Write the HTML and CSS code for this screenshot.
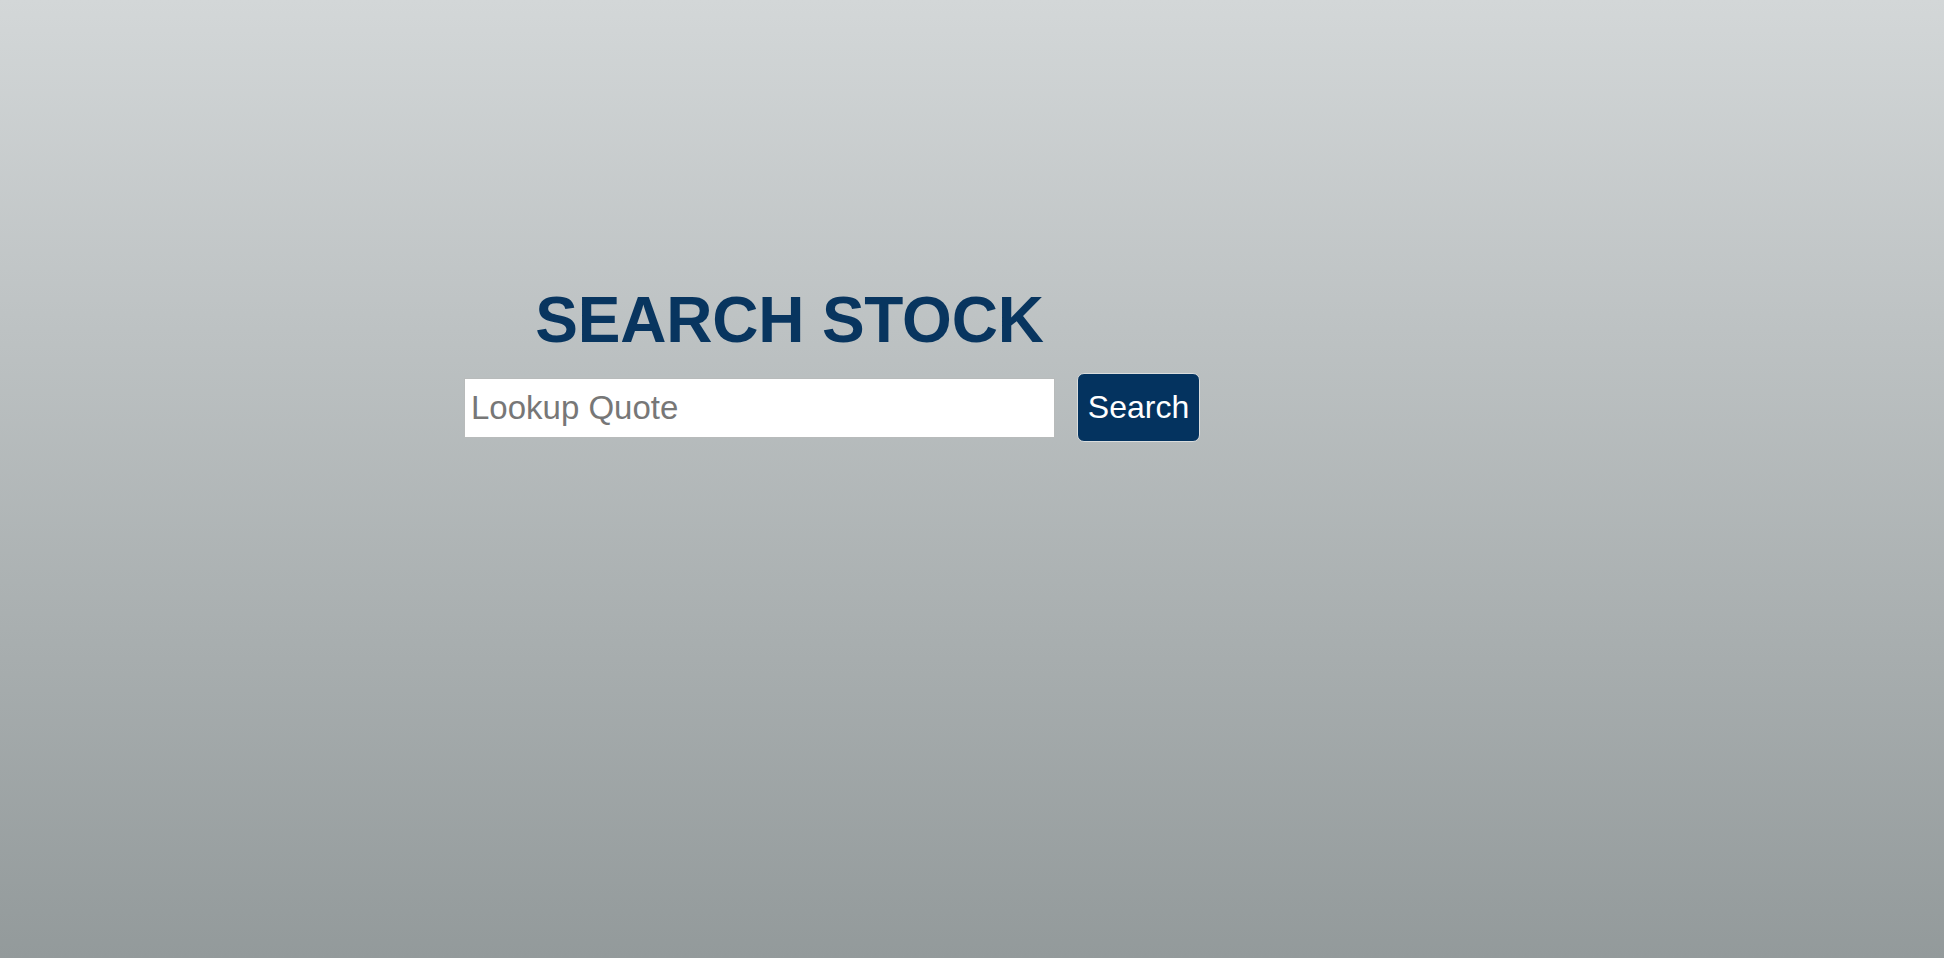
FILE: index.html
```html
<!DOCTYPE html>
<html lang="en">
<head>
<meta charset="utf-8">
<title>Search Stock</title>
<link rel="stylesheet" href="styles.css">
</head>
<body>
<main class="page">
  <section class="search-box">
    <h1 class="title">SEARCH STOCK</h1>
    <form class="search-row" onsubmit="return false;">
      <input class="quote-input" type="text" placeholder="Lookup Quote">
      <button class="search-btn" type="submit">Search</button>
    </form>
  </section>
</main>
</body>
</html>
```

FILE: styles.css
```css
html, body {
  margin: 0;
  padding: 0;
}

body {
  min-height: 100vh;
  background: linear-gradient(to bottom, #d3d7d8 0%, #939a9b 100%);
  font-family: "Liberation Sans", Arial, Helvetica, sans-serif;
}

.page {
  min-height: 958px;
  padding-top: 288px;
  box-sizing: border-box;
}

.search-box {
  margin-left: 464px;
  width: 651px;
}

.title {
  margin: 0;
  text-align: center;
  font-size: 64px;
  line-height: 64px;
  font-weight: 700;
  color: #08355f;
  letter-spacing: -0.2px;
}

.search-row {
  display: flex;
  align-items: center;
  gap: 22px;
  margin: 21px 0 0 0;
  width: 800px;
}

.quote-input {
  width: 591px;
  height: 60px;
  box-sizing: border-box;
  border: 1px solid #b8bbbb;
  box-shadow: inset 0 0 0 1px #ffffff;
  background: #ffffff;
  padding: 0 6px;
  font-family: "Liberation Sans", Arial, Helvetica, sans-serif;
  font-size: 33px;
  color: #333;
}

.quote-input::placeholder {
  color: #777777;
}

.search-btn {
  width: 123px;
  height: 69px;
  box-sizing: border-box;
  border: 1px solid #dadddd;
  border-radius: 7px;
  background: #04335f;
  color: #ffffff;
  font-family: "Liberation Sans", Arial, Helvetica, sans-serif;
  font-size: 32px;
  padding: 0;
  cursor: pointer;
}
```
